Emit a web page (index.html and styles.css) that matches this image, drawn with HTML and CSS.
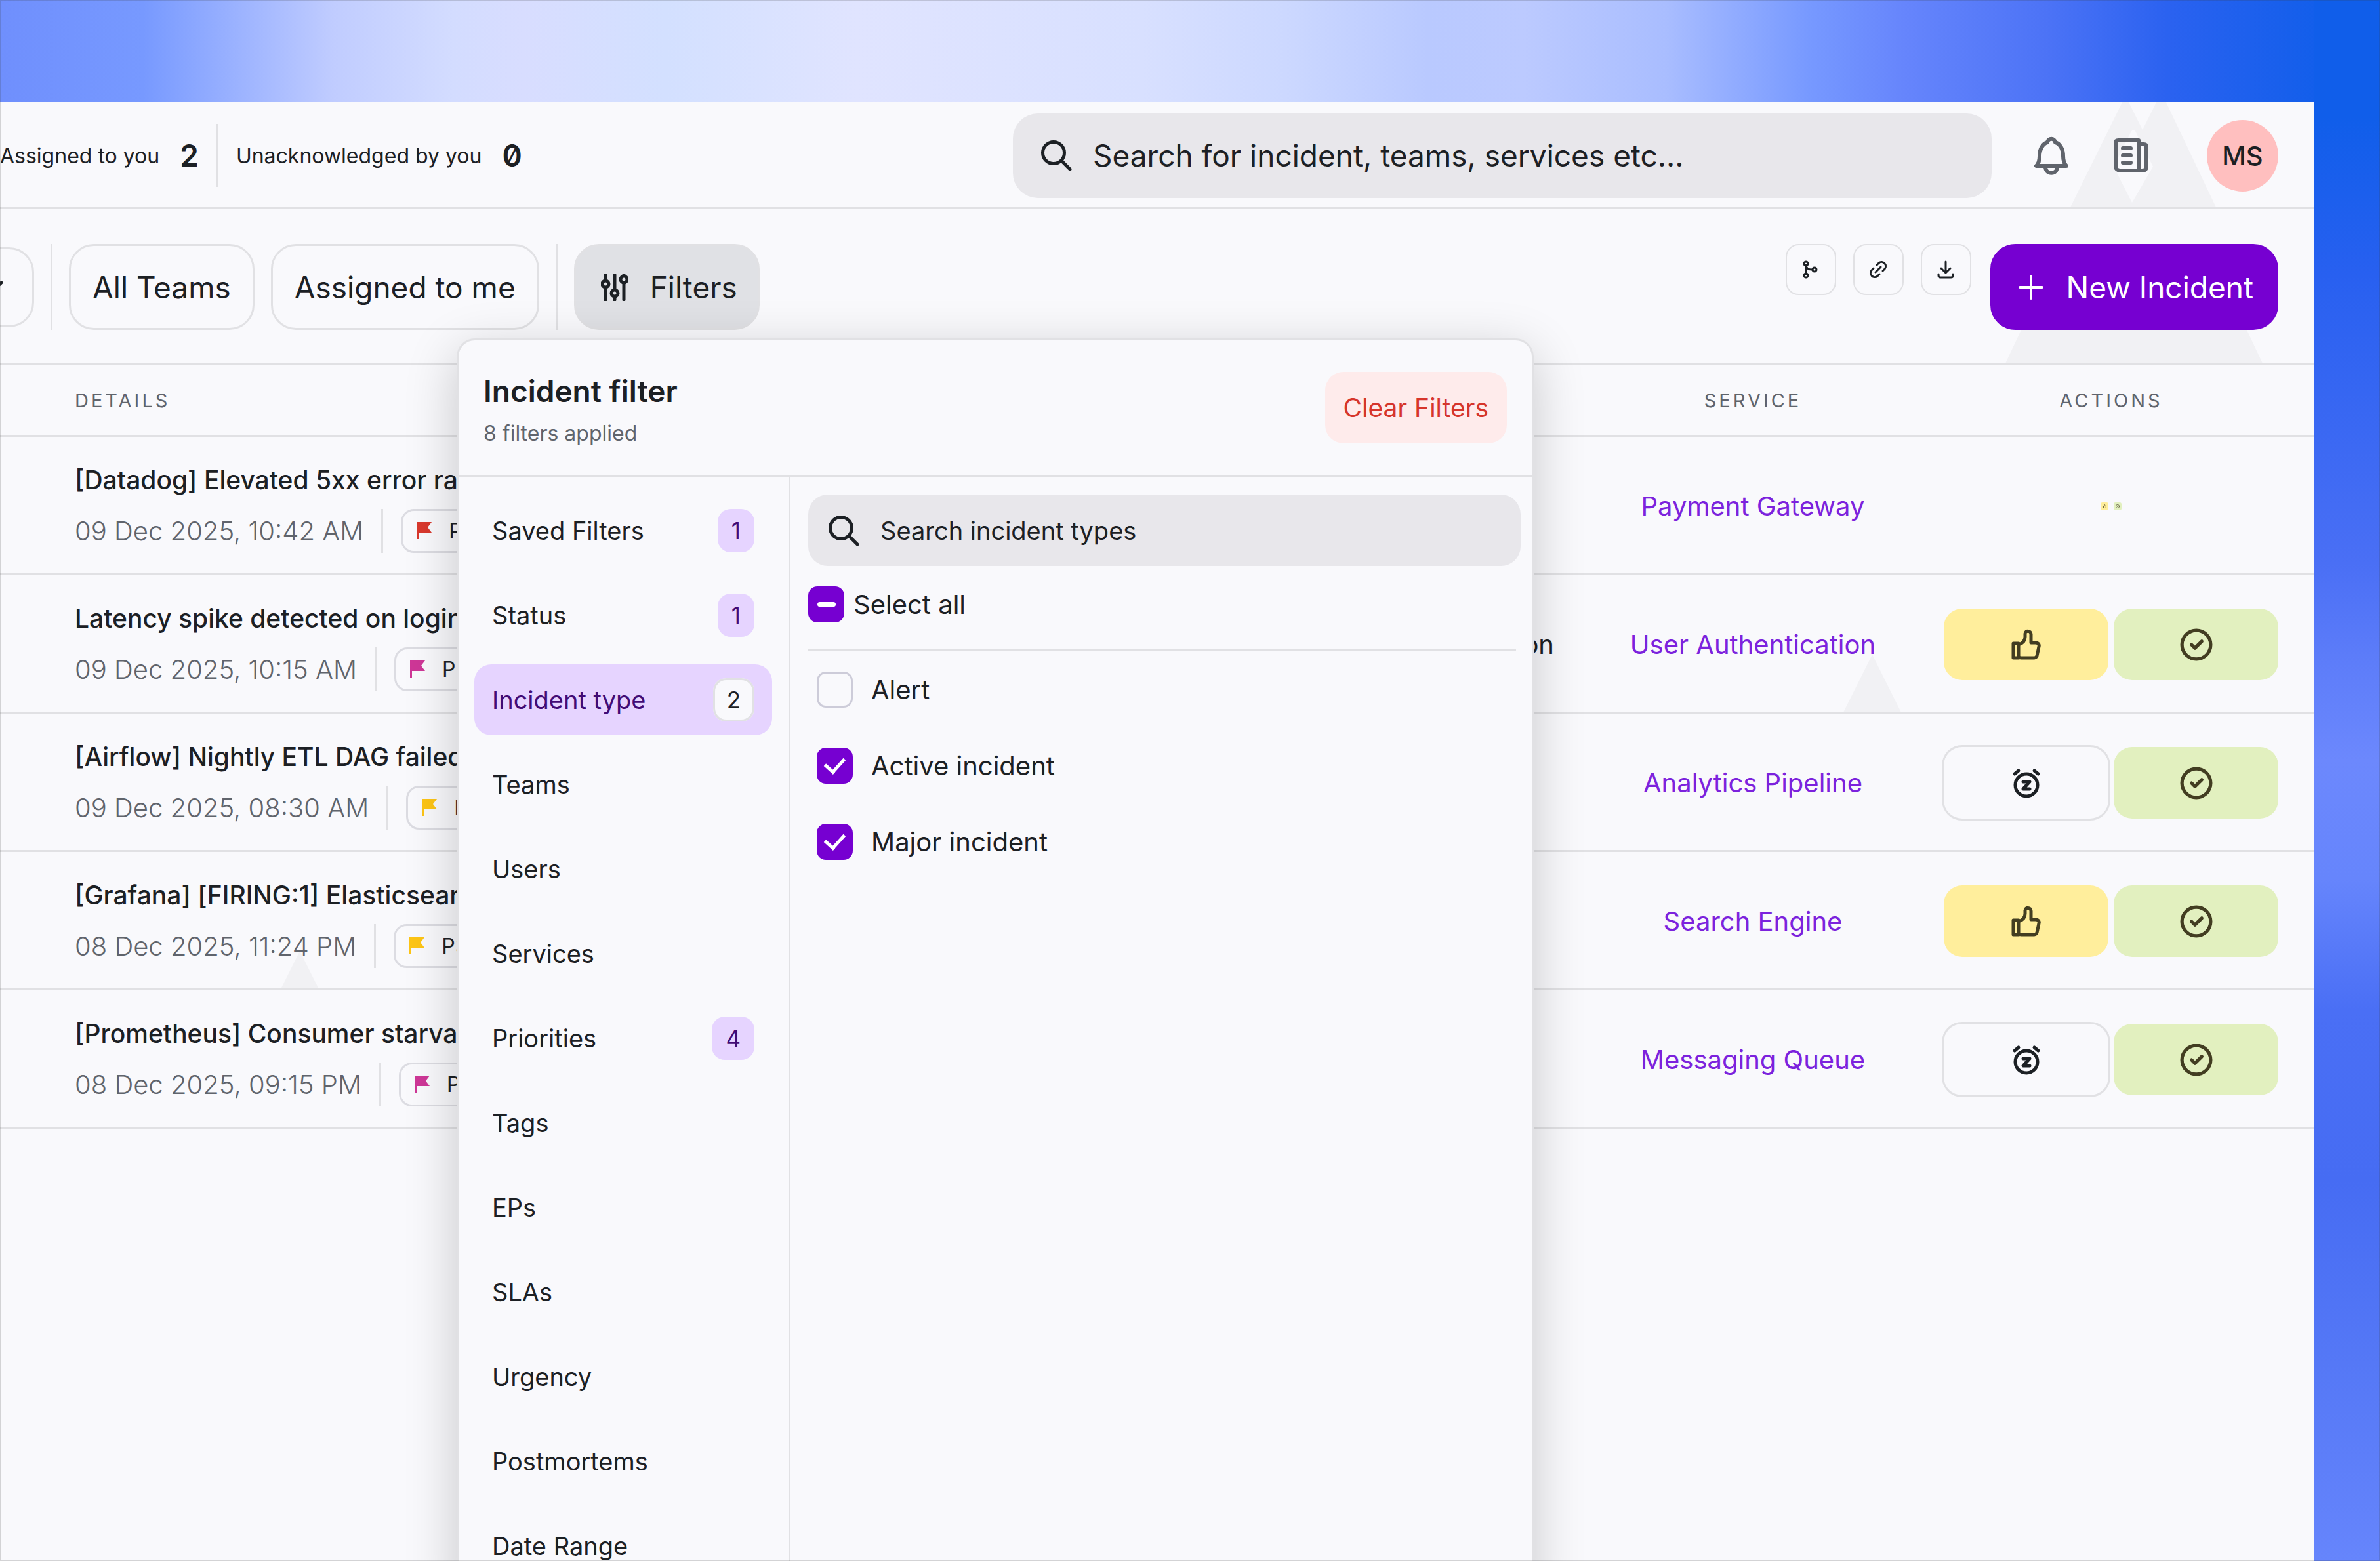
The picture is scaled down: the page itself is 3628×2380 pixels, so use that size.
FILE: index.html
```
<!DOCTYPE html>
<html lang="en">

<head>
    <meta charset="UTF-8">
    <title>Incidents</title>
    <link rel="stylesheet" href="styles.css">
</head>

<body>
    <!-- Shared icons -->
    <svg class="sprite" aria-hidden="true">
        <symbol id="icon-search" viewBox="0 0 48 48">
            <circle cx="20" cy="20" r="16.5" />
            <path d="M32 32L45 45" />
        </symbol>
        <symbol id="icon-flag" viewBox="0 0 23 26">
            <path d="M0 0H23L17 8L23 16H3V26H0Z" />
        </symbol>
        <symbol id="icon-thumb" viewBox="0 0 48 48">
            <path d="M4 22H12V44H4ZM12 24C18 22 22 18 22 12V7C22 2 31 2 31 8V21H38C42 21 44 24 43 27L40 41C39 43 38 44 36 44H16C13 44 12 43 12 40" />
        </symbol>
        <symbol id="icon-check" viewBox="0 0 48 48">
            <circle cx="24" cy="24" r="21" />
            <path d="M17 24L22 29L32 19" />
        </symbol>
        <symbol id="icon-snooze" viewBox="0 0 48 48">
            <circle cx="24" cy="27" r="17" />
            <path d="M19 22H29L19 33H29M6 10L12 5M42 10L36 5" />
        </symbol>
    </svg>

    <div class="app">
        <!-- Background logo marks -->
        <svg class="mark mark-header" viewBox="0 0 222 160" aria-hidden="true">
            <path d="M0 160L79 0H89L110 42L131 0H146L222 160ZM94 153L66 98L94 42H98L126 98Z" fill-rule="evenodd" />
        </svg>
        <svg class="mark mark-toolbar" viewBox="0 0 392 70" aria-hidden="true">
            <path d="M0 70L33 0H359L392 70Z" />
        </svg>
        <svg class="mark mark-row-two" viewBox="0 0 88 88" aria-hidden="true">
            <path d="M0 88L44 0L88 88Z" />
        </svg>
        <svg class="mark mark-row-four" viewBox="0 0 58 58" aria-hidden="true">
            <path d="M0 58L29 0L58 58Z" />
        </svg>

        <header class="topbar">
            <div class="stats">
                <div class="stat">Assigned to you <strong>2</strong></div>
                <span class="divider"></span>
                <div class="stat">Unacknowledged by you <strong>0</strong></div>
            </div>
            <label class="search">
                <svg class="icon-line" width="48" height="48"><use href="#icon-search" /></svg>
                <input type="text" placeholder="Search for incident, teams, services etc..." aria-label="Search">
            </label>
            <button type="button" class="plain-btn" aria-label="Notifications">
                <svg class="icon-line" width="62" height="62" viewBox="0 0 62 62">
                    <path d="M8 47H54C50 43 49 39 49 32C49 21 44 13 37 11C36 4 26 4 25 11C18 13 13 21 13 32C13 39 12 43 8 47ZM22 48C22 61 40 61 40 48" />
                </svg>
            </button>
            <button type="button" class="plain-btn" aria-label="News">
                <svg class="icon-line" width="62" height="62" viewBox="0 0 62 62">
                    <path d="M42 8V50C42 53 44 54 47 54H14C10 54 7 52 7 47V12C7 9 8 8 11 8ZM42 14H50C53 14 54 15 54 18V48C54 52 52 54 47 54M18 20H30M18 31H30M18 42H30" />
                </svg>
            </button>
            <div class="avatar">MS</div>
        </header>

        <div class="toolbar">
            <button type="button" class="btn btn-more" aria-label="More">
                <svg class="icon-line" width="36" height="20" viewBox="0 0 36 20"><path d="M3 3L18 17L33 3" /></svg>
            </button>
            <span class="divider"></span>
            <button type="button" class="btn">All Teams</button>
            <button type="button" class="btn">Assigned to me</button>
            <span class="divider"></span>
            <button type="button" class="btn btn-filters">
                <svg class="icon-line" width="42" height="42" viewBox="0 0 42 42">
                    <path d="M7 2V10M7 22V40M21 2V24M21 36V40M35 2V3M35 15V40" />
                    <circle cx="7" cy="16" r="5" />
                    <circle cx="21" cy="30" r="5" />
                    <circle cx="35" cy="9" r="5" />
                </svg>
                Filters
            </button>
            <div class="tools">
                <button type="button" class="tool-btn" aria-label="Merge">
                    <svg class="icon-line" width="30" height="30" viewBox="0 0 30 30">
                        <path d="M8 8V22M8 8C8 13 11 15 17 15" />
                        <circle cx="8" cy="6" r="3" />
                        <circle cx="8" cy="24" r="3" />
                        <circle cx="21" cy="15" r="3" />
                    </svg>
                </button>
                <button type="button" class="tool-btn" aria-label="Copy link">
                    <svg class="icon-line" width="30" height="30" viewBox="0 0 30 30">
                        <path d="M11 19L19 11M13 8L16 5C22 0 30 8 25 14L22 17M8 13L5 16C0 22 8 30 14 25L17 22" />
                    </svg>
                </button>
                <button type="button" class="tool-btn" aria-label="Download">
                    <svg class="icon-line" width="30" height="30" viewBox="0 0 30 30">
                        <path d="M15 3V20M8 13L15 20L22 13M4 22V24C4 26 5 27 7 27H23C25 27 26 26 26 24V22" />
                    </svg>
                </button>
            </div>
            <button type="button" class="btn btn-primary">
                <svg class="icon-line" width="40" height="40" viewBox="0 0 40 40"><path d="M20 3V37M3 20H37" /></svg>
                New Incident
            </button>
        </div>

        <table class="incidents">
            <thead>
                <tr>
                    <th class="details">Details</th>
                    <th class="source"></th>
                    <th class="service">Service</th>
                    <th class="actions">Actions</th>
                </tr>
            </thead>
            <tbody>
                <tr>
                    <td class="details">
                        <div class="title">[Datadog] Elevated 5xx error rate</div>
                        <div class="meta">09 Dec 2025, 10:42 AM <span class="divider"></span>
                            <span class="priority"><svg class="flag red"><use href="#icon-flag" /></svg>P1</span></div>
                    </td>
                    <td class="source"></td>
                    <td class="service"><a href="#">Payment Gateway</a></td>
                    <td class="actions">
                        <div class="mini-actions">
                            <button type="button" class="mini ack" aria-label="Acknowledge"><svg class="icon-line" width="6" height="6"><use href="#icon-thumb" /></svg></button>
                            <button type="button" class="mini resolve" aria-label="Resolve"><svg class="icon-line" width="6" height="6"><use href="#icon-check" /></svg></button>
                        </div>
                    </td>
                </tr>
                <tr>
                    <td class="details">
                        <div class="title">Latency spike detected on login</div>
                        <div class="meta">09 Dec 2025, 10:15 AM <span class="divider"></span>
                            <span class="priority"><svg class="flag pink"><use href="#icon-flag" /></svg>P2</span></div>
                    </td>
                    <td class="source">on</td>
                    <td class="service"><a href="#">User Authentication</a></td>
                    <td class="actions">
                        <div class="action-group">
                            <button type="button" class="action ack" aria-label="Acknowledge"><svg class="icon-line" width="48" height="48"><use href="#icon-thumb" /></svg></button>
                            <button type="button" class="action resolve" aria-label="Resolve"><svg class="icon-line" width="50" height="50"><use href="#icon-check" /></svg></button>
                        </div>
                    </td>
                </tr>
                <tr>
                    <td class="details">
                        <div class="title">[Airflow] Nightly ETL DAG failed</div>
                        <div class="meta">09 Dec 2025, 08:30 AM <span class="divider"></span>
                            <span class="priority"><svg class="flag yellow"><use href="#icon-flag" /></svg>P3</span></div>
                    </td>
                    <td class="source"></td>
                    <td class="service"><a href="#">Analytics Pipeline</a></td>
                    <td class="actions">
                        <div class="action-group">
                            <button type="button" class="action snooze" aria-label="Snooze"><svg class="icon-line" width="48" height="48"><use href="#icon-snooze" /></svg></button>
                            <button type="button" class="action resolve" aria-label="Resolve"><svg class="icon-line" width="50" height="50"><use href="#icon-check" /></svg></button>
                        </div>
                    </td>
                </tr>
                <tr>
                    <td class="details">
                        <div class="title">[Grafana] [FIRING:1] Elasticsear…</div>
                        <div class="meta">08 Dec 2025, 11:24 PM <span class="divider"></span>
                            <span class="priority"><svg class="flag yellow"><use href="#icon-flag" /></svg>P3</span></div>
                    </td>
                    <td class="source"></td>
                    <td class="service"><a href="#">Search Engine</a></td>
                    <td class="actions">
                        <div class="action-group">
                            <button type="button" class="action ack" aria-label="Acknowledge"><svg class="icon-line" width="48" height="48"><use href="#icon-thumb" /></svg></button>
                            <button type="button" class="action resolve" aria-label="Resolve"><svg class="icon-line" width="50" height="50"><use href="#icon-check" /></svg></button>
                        </div>
                    </td>
                </tr>
                <tr>
                    <td class="details">
                        <div class="title">[Prometheus] Consumer starva…</div>
                        <div class="meta">08 Dec 2025, 09:15 PM <span class="divider"></span>
                            <span class="priority"><svg class="flag pink"><use href="#icon-flag" /></svg>P2</span></div>
                    </td>
                    <td class="source"></td>
                    <td class="service"><a href="#">Messaging Queue</a></td>
                    <td class="actions">
                        <div class="action-group">
                            <button type="button" class="action snooze" aria-label="Snooze"><svg class="icon-line" width="48" height="48"><use href="#icon-snooze" /></svg></button>
                            <button type="button" class="action resolve" aria-label="Resolve"><svg class="icon-line" width="50" height="50"><use href="#icon-check" /></svg></button>
                        </div>
                    </td>
                </tr>
            </tbody>
        </table>

        <!-- Filter menu -->
        <section class="filter-menu">
            <div class="filter-head">
                <div>
                    <h2>Incident filter</h2>
                    <p>8 filters applied</p>
                </div>
                <button type="button" class="clear-btn">Clear Filters</button>
            </div>
            <div class="filter-body">
                <nav class="filter-nav">
                    <button type="button">Saved Filters <span class="count">1</span></button>
                    <button type="button">Status <span class="count">1</span></button>
                    <button type="button" class="active">Incident type <span class="count">2</span></button>
                    <button type="button">Teams</button>
                    <button type="button">Users</button>
                    <button type="button">Services</button>
                    <button type="button">Priorities <span class="count">4</span></button>
                    <button type="button">Tags</button>
                    <button type="button">EPs</button>
                    <button type="button">SLAs</button>
                    <button type="button">Urgency</button>
                    <button type="button">Postmortems</button>
                    <button type="button">Date Range</button>
                </nav>
                <div class="filter-options">
                    <label class="search search-small">
                        <svg class="icon-line" width="48" height="48"><use href="#icon-search" /></svg>
                        <input type="text" placeholder="Search incident types" aria-label="Search incident types">
                    </label>
                    <label class="select-all"><input type="checkbox" class="partial"> Select all</label>
                    <div class="option-list">
                        <label><input type="checkbox"> Alert</label>
                        <label><input type="checkbox" checked> Active incident</label>
                        <label><input type="checkbox" checked> Major incident</label>
                    </div>
                </div>
            </div>
        </section>
    </div>
</body>

</html>
```
FILE: styles.css
```
* {
    box-sizing: border-box;
}

body {
    margin: 0;
    height: 100vh;
    overflow: hidden;
    display: flex;
    padding: 156px 101px 0 0;
    font-family: Inter, "Liberation Sans", sans-serif;
    font-size: 40px;
    color: #1c2024;
    background:
        linear-gradient(to bottom, #105eea 0, #105eea 180px, #2860f0 420px, #4a6ff5 860px, #5c7cf9 1000px, #6c88fd 1160px, #6685fc 1340px, #4a6ff5 1540px, #466cf3 1800px, #5578f6 2080px, #6685fc 2380px) right top / 101px 100% no-repeat,
        linear-gradient(to right, #6f8ffd 0, #7799ff 6%, #c0ccff 14%, #d3dcff 19%, #d8ddff 22%, #d3e0ff 28%, #e0e4ff 36%, #d8e0ff 48%, #ccd8ff 54%, #b9c9ff 60%, #bccaff 64%, #a9bdff 70%, #7799ff 76%, #6685fc 80%, #4c73f6 86%, #2b62f0 91%, #105eea 98%);
}

/* thin frame around the window */
body::after {
    content: "";
    position: fixed;
    inset: 0;
    border: 2px solid rgba(60, 60, 60, 0.2);
    pointer-events: none;
}

button {
    font-family: inherit;
    color: inherit;
    margin: 0;
    padding: 0;
    border: none;
    background: none;
    cursor: pointer;
}

input {
    font-family: inherit;
}

.sprite {
    position: absolute;
    width: 0;
    height: 0;
}

.icon-line {
    display: block;
    flex: none;
    fill: none;
    stroke: currentColor;
    stroke-width: 5px;
    stroke-linecap: round;
    stroke-linejoin: round;
}

.divider {
    flex: none;
    align-self: stretch;
    width: 3px;
    background: #e1e1e4;
}

.app {
    position: relative;
    flex: 1;
    overflow: hidden;
    background: #f9f9fc;
}

/* background marks */
.mark {
    position: absolute;
    fill: #f1f1f4;
}

.mark-header {
    top: 0;
    right: 149px;
    width: 222px;
}

.mark-toolbar {
    top: 328px;
    right: 78px;
    width: 392px;
}

.mark-row-two {
    top: 842px;
    right: 629px;
    width: 88px;
}

.mark-row-four {
    top: 1294px;
    left: 428px;
    width: 58px;
}

/* top bar */
.topbar {
    position: relative;
    display: flex;
    align-items: center;
    height: 163px;
    padding: 2px 54px 0 0;
    border-bottom: 3px solid #e1e1e4;
}

.stats {
    display: flex;
    align-items: center;
    gap: 27px;
    height: 96px;
    font-size: 32px;
}

.stat {
    display: flex;
    align-items: center;
    gap: 31px;
}

.stat strong {
    font-size: 46px;
    font-weight: 600;
    font-feature-settings: "zero";
}

.search {
    display: flex;
    align-items: center;
    gap: 32px;
    width: 1492px;
    height: 129px;
    margin-left: auto;
    padding: 0 42px;
    border-radius: 38px;
    background: #e8e7eb;
}

.search input {
    flex: 1;
    border: none;
    outline: none;
    padding: 0;
    background: none;
    font-size: 46px;
    color: #1c2024;
}

.search input::placeholder {
    color: #1c2024;
    opacity: 1;
}

.plain-btn {
    margin-left: 60px;
    color: #60646c;
}

.plain-btn .icon-line {
    stroke-width: 6px;
}

.avatar {
    display: flex;
    align-items: center;
    justify-content: center;
    width: 109px;
    height: 109px;
    margin-left: 84px;
    border-radius: 50%;
    background: #ffbfbf;
    font-weight: 500;
}

/* toolbar */
.toolbar {
    position: relative;
    display: flex;
    gap: 25px;
    height: 237px;
    padding: 53px 54px 50px 0;
    border-bottom: 3px solid #e1e1e4;
}

.btn {
    padding: 0 33px;
    border: 3px solid #e1e1e4;
    border-radius: 38px;
    font-size: 46px;
    white-space: nowrap;
}

.btn-more {
    align-self: center;
    height: 122px;
    width: 120px;
    margin-left: -68px;
    padding-left: 34px;
}

.btn-filters {
    display: flex;
    align-items: center;
    gap: 33px;
    padding: 0 31px 0 38px;
    background: #e0e1e5;
}

.tools {
    display: flex;
    gap: 26px;
    margin: 0 4px 0 auto;
}

.tool-btn {
    display: flex;
    align-items: center;
    justify-content: center;
    width: 77px;
    height: 78px;
    border: 2px solid #e1e1e4;
    border-radius: 20px;
}

.tool-btn .icon-line {
    stroke-width: 3px;
}

.btn-primary {
    display: flex;
    align-items: center;
    gap: 34px;
    padding: 0 35px 0 39px;
    border-color: #7600d1;
    background: #7600d1;
    color: #fff;
}

.btn-primary .icon-line {
    stroke-width: 4px;
}

/* incident table */
.incidents {
    position: relative;
    width: 100%;
    table-layout: fixed;
    border-collapse: separate;
    border-spacing: 0;
}

.incidents th {
    height: 110px;
    padding: 2px 0 0;
    border-bottom: 3px solid #e1e1e4;
    color: #60646c;
    font-size: 29px;
    font-weight: 400;
    letter-spacing: 4px;
    text-transform: uppercase;
}

.incidents td {
    height: 211px;
    padding: 3px 0 0;
    border-bottom: 3px solid #e1e1e4;
    text-align: center;
}

.incidents .details {
    padding-left: 114px;
    text-align: left;
    white-space: nowrap;
}

.incidents .source {
    padding-right: 66px;
    text-align: right;
}

th.service {
    width: 474px;
}

th.actions {
    width: 618px;
}

.title {
    margin-bottom: 13px;
    font-size: 39px;
    font-weight: 500;
    line-height: 62px;
}

.meta {
    display: flex;
    align-items: center;
    gap: 27px;
    height: 67px;
    color: #60646c;
    font-weight: 300;
}

.priority {
    display: flex;
    align-items: center;
    gap: 26px;
    height: 67px;
    padding: 0 21px;
    border: 3px solid #dcdce2;
    border-radius: 20px;
    color: #1c2024;
    font-size: 32px;
    font-weight: 400;
}

.flag {
    flex: none;
    width: 23px;
    height: 26px;
}

.red {
    fill: #d9382d;
}

.pink {
    fill: #ce3797;
}

.yellow {
    fill: #fdc516;
}

.service a {
    color: #7c22dd;
    text-decoration: none;
}

.action-group,
.mini-actions {
    display: flex;
    justify-content: center;
    gap: 8px;
}

.action {
    display: flex;
    align-items: center;
    justify-content: center;
    width: 251px;
    height: 109px;
    border-radius: 28px;
}

.mini {
    display: flex;
    align-items: center;
    justify-content: center;
    width: 12px;
    height: 12px;
    border-radius: 3px;
}

.ack {
    background: #ffee9c;
    color: #423d21;
}

.resolve {
    background: #e2f0bf;
    color: #423d21;
}

.snooze {
    box-shadow: 0 0 0 3px #e1e1e4;
}

/* filter menu */
.filter-menu {
    position: absolute;
    top: 360px;
    left: 696px;
    width: 1642px;
    border: 3px solid #e1e1e4;
    border-radius: 28px;
    background: #f9f9fc;
    box-shadow: 0 20px 80px rgba(0, 0, 0, 0.2);
}

.filter-head {
    display: flex;
    align-items: center;
    justify-content: space-between;
    height: 208px;
    padding: 0 38px;
    border-bottom: 3px solid #e1e1e4;
}

.filter-head h2 {
    margin: 6px 0 0;
    font-size: 46px;
    font-weight: 600;
    line-height: 72px;
}

.filter-head p {
    margin: 0;
    color: #60646c;
    font-size: 32px;
    line-height: 58px;
}

.clear-btn {
    height: 109px;
    padding: 0 28px;
    border-radius: 28px;
    background: #feebeb;
    color: #d6352b;
    font-size: 39px;
}

.filter-body {
    display: flex;
}

.filter-nav {
    display: flex;
    flex-direction: column;
    gap: 21px;
    width: 506px;
    padding: 28px 25px 28px 24px;
    border-right: 3px solid #e1e1e4;
}

.filter-nav button {
    display: flex;
    align-items: center;
    justify-content: space-between;
    height: 108px;
    padding: 0 27px;
    border-radius: 26px;
    font-size: 38px;
}

.filter-nav .active {
    background: #e6d4ff;
    color: #420b75;
}

.count {
    padding: 0 21px;
    border-radius: 20px;
    background: #e6d4ff;
    color: #420b75;
    font-size: 35px;
    line-height: 66px;
}

.active .count {
    background: #f9f9fc;
    box-shadow: inset 0 0 0 3px #e1e1e4;
    color: #1c2024;
}

.filter-options {
    flex: 1;
    padding: 27px 17px 0 27px;
}

.search-small {
    width: auto;
    height: 109px;
    margin: 0;
    padding: 0 30px;
    border-radius: 30px;
}

.search-small input {
    font-size: 38px;
}

.select-all {
    display: flex;
    align-items: center;
    gap: 14px;
    margin: 31px 7px 0 0;
    padding-bottom: 41px;
    border-bottom: 3px solid #e1e1e4;
}

.option-list {
    display: flex;
    flex-direction: column;
    gap: 62px;
    padding: 31px 13px;
}

.option-list label {
    display: flex;
    align-items: center;
    gap: 28px;
    height: 54px;
}

input[type="checkbox"] {
    appearance: none;
    display: flex;
    align-items: center;
    justify-content: center;
    width: 55px;
    height: 55px;
    margin: 0;
    border: 3px solid #cdccd9;
    border-radius: 14px;
}

input[type="checkbox"]:checked,
input.partial {
    border-color: #7600d1;
    background: #7600d1;
}

input[type="checkbox"]:checked::before {
    content: "";
    width: 24px;
    height: 14px;
    margin-bottom: 7px;
    border-left: 5px solid #fff;
    border-bottom: 5px solid #fff;
    transform: rotate(-48deg);
}

input.partial::before {
    content: "";
    width: 28px;
    height: 7px;
    border-radius: 4px;
    background: #fff;
}
```
